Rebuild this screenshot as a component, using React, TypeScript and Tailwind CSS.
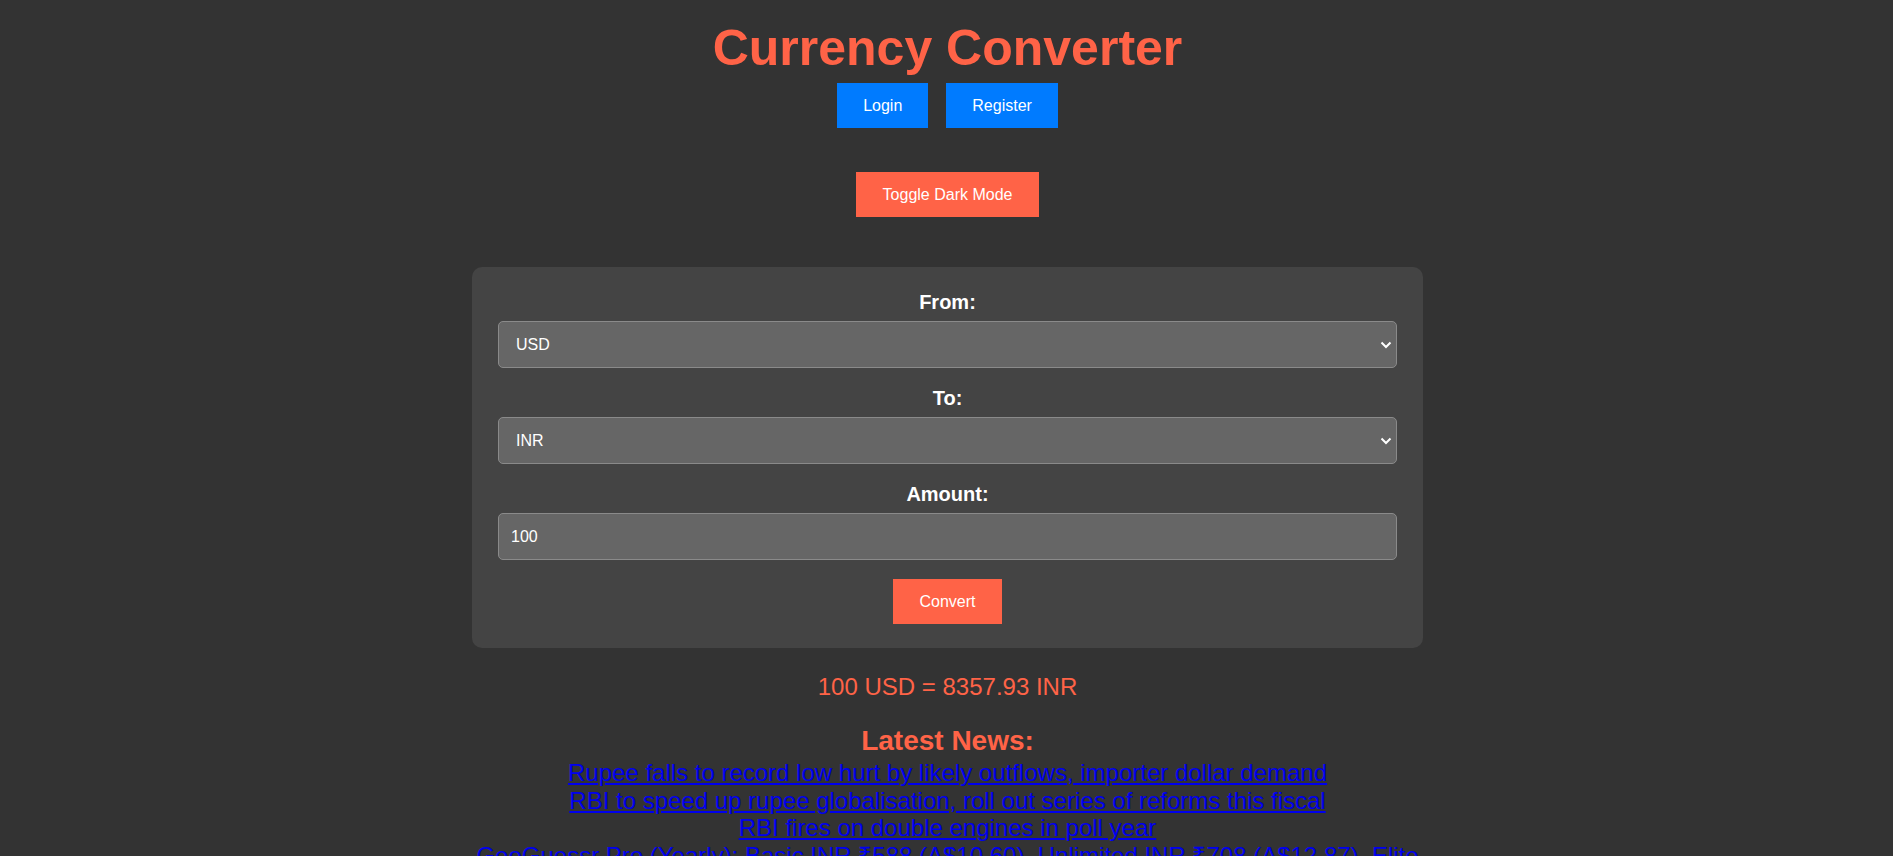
import React, { useState } from 'react';

const news = [
  'Rupee falls to record low hurt by likely outflows, importer dollar demand',
  'RBI to speed up rupee globalisation, roll out series of reforms this fiscal',
  'RBI fires on double engines in poll year',
  'GeoGuessr Pro (Yearly): Basic INR ₹588 (A$10.60), Unlimited INR ₹708 (A$12.87), Elite INR ₹1,358 (A$24.69)',
];

function Chevron() {
  return (
    <svg
      className="pointer-events-none absolute right-[5px] top-1/2 -translate-y-1/2"
      width="12"
      height="8"
      viewBox="0 0 12 8"
      fill="none"
      stroke="white"
      strokeWidth="2"
    >
      <path d="M1.5 1.5 L6 6 L10.5 1.5" />
    </svg>
  );
}

function CurrencySelect({ value, onChange }: { value: string; onChange: (v: string) => void }) {
  return (
    <div className="relative w-full">
      <select
        value={value}
        onChange={(e) => onChange(e.target.value)}
        className="w-full h-[47px] appearance-none rounded-[5px] border border-[#8a8a8a] bg-[#666] pl-[17px] text-[16px] text-white outline-none"
      >
        <option value="USD">USD</option>
        <option value="INR">INR</option>
        <option value="EUR">EUR</option>
        <option value="GBP">GBP</option>
        <option value="AUD">AUD</option>
      </select>
      <Chevron />
    </div>
  );
}

export default function App() {
  const [from, setFrom] = useState('USD');
  const [to, setTo] = useState('INR');
  const [amount, setAmount] = useState('100');

  return (
    <div className="min-h-screen w-full bg-[#333] font-['Liberation_Sans',Arial,sans-serif] flex flex-col items-center pt-[19px] pl-[2px] pb-10">
      <h1 className="text-[50px] leading-[58px] font-bold text-[#ff6347]">Currency Converter</h1>

      <div className="mt-[6px] flex gap-[18px]">
        <button className="h-[45px] px-[26px] bg-[#007bff] text-white text-[16px]">Login</button>
        <button className="h-[45px] px-[26px] bg-[#007bff] text-white text-[16px]">Register</button>
      </div>

      <button className="mt-[44px] h-[45px] px-[27px] bg-[#ff6347] text-white text-[16px]">Toggle Dark Mode</button>

      <div className="mt-[50px] w-[951px] rounded-[10px] bg-[#444] px-[26px] pt-[24px] pb-[24px] flex flex-col items-center">
        <label className="block text-[20px] leading-[23px] font-bold text-white mb-[7px]">From:</label>
        <CurrencySelect value={from} onChange={setFrom} />

        <label className="block mt-[19px] text-[20px] leading-[23px] font-bold text-white mb-[7px]">To:</label>
        <CurrencySelect value={to} onChange={setTo} />

        <label className="block mt-[19px] text-[20px] leading-[23px] font-bold text-white mb-[7px]">Amount:</label>
        <input
          value={amount}
          onChange={(e) => setAmount(e.target.value)}
          className="w-full h-[47px] rounded-[5px] border border-[#8a8a8a] bg-[#666] pl-[12px] text-[16px] text-white outline-none"
        />

        <button className="mt-[19px] h-[45px] px-[26px] bg-[#ff6347] text-white text-[16px]">Convert</button>
      </div>

      <p className="mt-[25px] text-[24px] leading-[28px] text-[#ff6347]">100 USD = 8357.93 INR</p>

      <h2 className="mt-[24px] text-[28px] leading-[32px] font-bold text-[#ff6347]">Latest News:</h2>

      <div className="mt-[2px] w-[951px] text-center">
        {news.map((item) => (
          <div key={item} className="text-[24px] leading-[27.6px]">
            <a href="#" className="text-[#0000ee] underline">
              {item}
            </a>
          </div>
        ))}
      </div>
    </div>
  );
}
